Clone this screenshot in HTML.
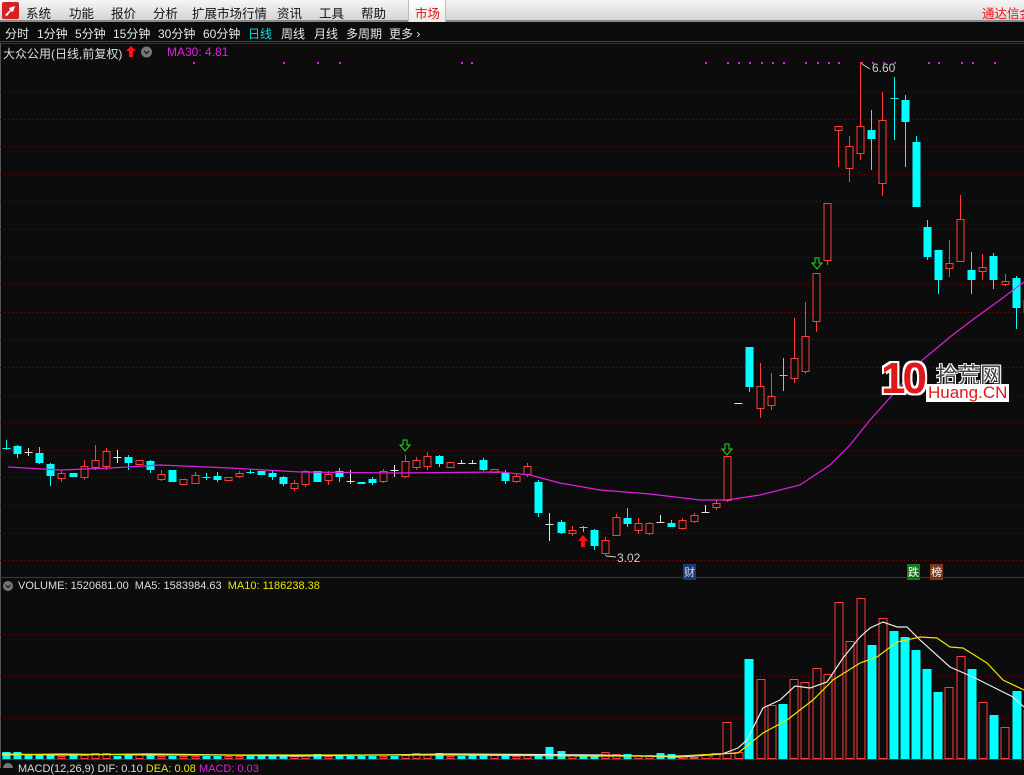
<!DOCTYPE html>
<html><head><meta charset="utf-8">
<style>
*{margin:0;padding:0;box-sizing:border-box}
body{width:1024px;height:768px;overflow:hidden;background:#0c0c0c;font-family:"Liberation Sans","Noto Sans CJK SC",sans-serif;position:relative}
#top{position:absolute;left:0;top:0;width:1024px;height:22px;background:linear-gradient(#f6f6f6,#d4d4d4);border-bottom:2px solid #8a8a8a}
#top span{position:absolute;top:3px;font-size:12.5px;color:#111;white-space:nowrap}
#tabs{position:absolute;top:24px;left:0;width:1024px;height:18px;border-bottom:1px solid #444}
#tabs span{position:absolute;top:1px;font-size:12px;color:#e8e8e8}
.t{position:absolute;font-size:12px;white-space:nowrap}
svg{position:absolute;left:0;top:0}
</style></head><body>
<div id="top">
<div style="position:absolute;left:2px;top:2px;width:17px;height:17px;background:#d92020;border-radius:2px"></div>
<svg width="22" height="22" style="left:0;top:0"><path d="M5 15 L10 10 L9 8 L15 6 L13 12 L11 11 L7 16Z" fill="#fff"/></svg>
<span style="left:26px">系统</span><span style="left:69px">功能</span><span style="left:111px">报价</span><span style="left:153px">分析</span><span style="left:192px">扩展市场行情</span><span style="left:277px">资讯</span><span style="left:319px">工具</span><span style="left:361px">帮助</span>
<div style="position:absolute;left:408px;top:0;width:38px;height:22px;background:linear-gradient(#fff,#eaeaea);border-left:1px solid #bbb;border-right:1px solid #bbb"></div>
<span style="left:415px;color:#e01010">市场</span>
<span style="left:982px;color:#f01010">通达信金</span>
</div>
<div id="tabs">
<span style="left:5px">分时</span><span style="left:37px">1分钟</span><span style="left:75px">5分钟</span><span style="left:113px">15分钟</span><span style="left:158px">30分钟</span><span style="left:203px">60分钟</span><span style="left:248px;color:#00e5e5">日线</span><span style="left:281px">周线</span><span style="left:314px">月线</span><span style="left:346px">多周期</span><span style="left:389px">更多 ›</span>
</div>
<div class="t" style="left:3px;top:45px;color:#ddd">大众公用(日线,前复权)</div>
<div class="t" style="left:167px;top:45px;color:#e020e0">MA30: 4.81</div>
<div class="t" style="left:872px;top:61px;color:#ccc">6.60</div>
<div class="t" style="left:617px;top:551px;color:#ccc">3.02</div>
<div class="t" style="left:683px;top:564px;color:#ddd;background:#1a3a7a;padding:0 1px;font-size:11px">财</div>
<div class="t" style="left:907px;top:564px;color:#fff;background:#1a7a1a;padding:0 1px;font-size:11px">跌</div>
<div class="t" style="left:930px;top:564px;color:#fff;background:#7a3a1a;padding:0 1px;font-size:11px">榜</div>
<div class="t" style="left:18px;top:580px;color:#ddd;font-size:11px">VOLUME: 1520681.00 &nbsp;MA5: 1583984.63 &nbsp;<span style="color:#e8e800">MA10: 1186238.38</span></div>
<div class="t" style="left:18px;top:763px;color:#ddd;font-size:11px">MACD(12,26,9) DIF: 0.10 <span style="color:#e8e800">DEA: 0.08</span> <span style="color:#e020e0">MACD: 0.03</span></div>
<svg id="c" width="1024" height="768"></svg>
<div class="t" style="left:881px;top:354px;font-size:44px;font-weight:bold;color:#e01818;letter-spacing:-3px;text-shadow:2px 2px 0 #fff,-2px -2px 0 #fff,2px -2px 0 #fff,-2px 2px 0 #fff">10</div>
<div class="t" style="left:936px;top:358px;font-size:22px;color:#444;text-shadow:1px 1px 0 #fff,-1px -1px 0 #fff,1px -1px 0 #fff,-1px 1px 0 #fff">拾荒网</div>
<div class="t" style="left:926px;top:384px;font-size:17px;line-height:18px;color:#e01818;background:#fff;padding:0 2px">Huang.CN</div>
<script>
var s='';
function L(x1,y1,x2,y2,c,w,d){s+='<line x1="'+x1+'" y1="'+y1+'" x2="'+x2+'" y2="'+y2+'" stroke="'+c+'" stroke-width="'+(w||1)+'"'+(d?' stroke-dasharray="'+d+'"':'')+'/>';}
function R(x,y,w,h,f,st){s+='<rect x="'+x+'" y="'+y+'" width="'+w+'" height="'+h+'" fill="'+f+'"'+(st?' stroke="'+st+'"':'')+'/>';}
function P(pts,c){s+='<polyline fill="none" stroke="'+c+'" stroke-width="1.2" points="'+pts.map(p=>p.join(',')).join(' ')+'"/>';}
L(0,43.5,1024,43.5,'#8a1010');L(0.5,43,0.5,768,'#555');
L(0,577.5,1024,577.5,'#a01010');L(0,759.5,1024,759.5,'#a01010');
for(var y=91;y<565;y+=27.6)L(0,Math.round(y)+.5,1024,Math.round(y)+.5,'#6a1010',1,'1 3');
[634,676,718].forEach(y=>L(0,y+.5,1024,y+.5,'#6a1010',1,'1 3'));
[193,283,317,339,461,471,705,727,738,749,761,772,783,805,817,828,838,861,872,883,894,928,938,961,972,994].forEach(x=>R(x,62,2,2,'#e020e0'));
var D=[['c',448,449,440,450],['c',446,454,445,458],['w',452,452,448,456],['c',453,463,447,464],['c',464,476,463,486],['r',473,478,470,482],['c',473,477,473,477],['r',466,477,460,480],['r',460,467,445,470],['r',451,466,448,470],['w',457,457,450,463],['c',457,463,455,470],['r',460,464,460,464],['c',461,470,460,473],['r',474,479,470,481],['c',470,482,470,482],['r',479,484,479,484],['r',475,483,472,484],['c',477,477,473,480],['c',476,480,472,482],['r',477,480,477,480],['r',473,476,471,478],['c',472,472,470,474],['c',471,475,471,475],['c',473,477,470,480],['c',477,484,476,486],['r',483,488,480,491],['r',471,484,470,487],['c',471,482,471,482],['r',474,480,471,485],['c',471,477,468,482],['w',481,481,470,484],['c',482,484,482,484],['c',479,483,477,485],['r',471,481,469,483],['w',470,470,465,477],['r',461,476,455,478],['r',460,467,457,470],['r',456,466,452,470],['c',456,464,455,467],['r',462,467,462,467],['w',463,463,460,463],['w',463,463,460,463],['c',460,470,458,471],['r',469,472,469,472],['c',473,481,470,484],['r',476,481,474,483],['r',466,474,463,477],['c',482,513,480,517],['w',524,524,513,541],['c',522,533,520,534],['r',530,533,526,536],['c',527,527,526,532],['c',530,546,529,550],['r',540,553,537,556],['r',517,535,514,536],['c',518,524,508,527],['r',523,530,518,534],['r',523,533,522,535],['w',522,522,515,523],['c',523,527,520,527],['r',520,528,518,530],['r',515,521,513,523],['w',512,512,505,512],['r',503,507,500,510],['r',456,500,456,502],
['w',403,403,403,403],['c',347,387,347,392],['r',386,408,363,418],['r',396,405,373,410],['c',375,375,358,391],['r',358,378,318,383],['r',336,371,302,374],['r',273,321,273,332],['r',203,260,203,265],['r',126,130,126,167],['r',146,168,136,182],['r',126,153,62,160],['c',130,139,110,170],['r',120,183,92,196],['c',98,98,77,140],['c',100,122,95,167],['c',142,207,136,207],['c',227,257,220,260],['c',250,280,250,294],['r',263,268,240,277],['r',219,261,195,261],['c',270,280,252,294],['r',267,271,254,280],['c',256,280,253,289],['r',281,284,274,286],['c',278,308,276,329],['r',300,312,290,318]];
var col={r:'#ff3c3c',c:'#00ffff',w:'#e0e0e0'};
var XS=[];
D.forEach(function(d,i){var x=i<=65?6+i*11.09:727+(i-65)*11.1;x=Math.round(x)+.5;XS.push(x);var c=col[d[0]];
 if(d[3]<d[1])L(x,d[3],x,d[1],c);if(d[4]>d[2])L(x,d[2],x,d[4],c);
 if(d[2]-d[1]<1){L(x-4,d[1]+.5,x+4,d[1]+.5,c);}
 else if(d[0]=='r')R(x-3.5,d[1]+.5,7,d[2]-d[1],'#0c0c0c',c);else R(x-4,d[1],8,d[2]-d[1],c);});
P([[8,467],[60,470],[110,468],[160,465],[230,468],[300,472],[400,473],[500,472],[530,475],[560,483],[600,490],[650,494],[700,500],[727,500],[760,495],[800,485],[830,465],[850,445],[870,420],[895,392],[920,362],[950,337],[975,318],[1000,300],[1024,282]],'#e020e0');
function GA(x,y){s+='<path d="M'+(x-2)+' '+y+'h4v5h3l-5 6-5-6h3z" fill="none" stroke="#20e020"/>';}
GA(405,440);GA(727,444);GA(817,258);
s+='<path d="M583 535l-5 6h3v6h4v-6h3z" fill="#ff1010"/>';
s+='<path d="M131 46l-5 5h3v6h4v-6h3z" fill="#ff1010"/>';
s+='<circle cx="146.5" cy="52" r="5.5" fill="#777"/><path d="M144 51l2.5 2.5 2.5-2.5" stroke="#222" fill="none" stroke-width="1.5"/>';
s+='<circle cx="8" cy="586" r="5" fill="#777"/><path d="M5.5 585l2.5 2.5 2.5-2.5" stroke="#222" fill="none" stroke-width="1.5"/>';
s+='<circle cx="8" cy="768" r="5" fill="#777"/>';
L(862,64,870,69,'#ccc');L(606,556,616,557,'#ccc');
var VB=[[683,756,'r'],[694,757,'r'],[706,754,'r'],[716,753,'r'],[727,722,'r'],[739,752,'r'],[749,659,'c'],[761,679,'r'],[772,705,'r'],[783,704,'c'],[794,679,'r'],[805,682,'r'],[817,668,'r'],[828,674,'r'],[839,602,'r'],[850,641,'r'],[861,598,'r'],[872,645,'c'],[883,618,'r'],[894,631,'c'],[905,637,'c'],[916,650,'c'],[927,669,'c'],[938,692,'c'],[949,687,'r'],[961,656,'r'],[972,669,'c'],[983,702,'r'],[994,715,'c'],[1005,727,'r'],[1017,691,'c'],[1028,710,'r']];
var hh=[7,7,4,5,5,3,5,4,6,6,3,5,5,4,3,3,3,3,3,3,3,3,3,3,3,4,3,4,5,3,3,3,3,3,3,3,4,6,5,6,3,3,4,4,4,4,3,4,4,6,8,4,4,3,7,5,5,4,4,6,5,4,4,4];
for(var i=0;i<61;i++){var x=XS[i],t=D[i][0]=='r'?'r':'c',h=hh[i]||4;if(i==49)h=12;
 if(t=='r')R(x-3.5,759-h+.5,7,h-1,'#0c0c0c',col.r);else R(x-4,759-h,8,h,col.c);}
VB.forEach(function(b){var x=b[0];if(b[2]=='r')R(x-4,b[1]+.5,8,758-b[1],'#0c0c0c',col.r);else R(x-4.5,b[1],9,759-b[1],col.c);});
P([[2,754],[60,755],[150,754],[300,756],[450,754],[600,755],[680,757],[722,754],[738,748],[747,740],[763,708],[780,700],[795,686],[810,688],[827,682],[843,658],[860,637],[870,628],[883,622],[897,627],[907,627],[920,640],[950,667],[973,677],[1013,697],[1024,707]],'#e8e8e8');
P([[2,755],[60,754],[150,755],[300,755],[450,755],[600,756],[680,756],[738,753],[763,733],[787,720],[813,700],[833,680],[860,663],[877,657],[897,642],[920,637],[937,638],[950,647],[963,648],[987,663],[1003,680],[1024,690]],'#e8e800');
document.getElementById('c').innerHTML=s;
</script>
</body></html>
